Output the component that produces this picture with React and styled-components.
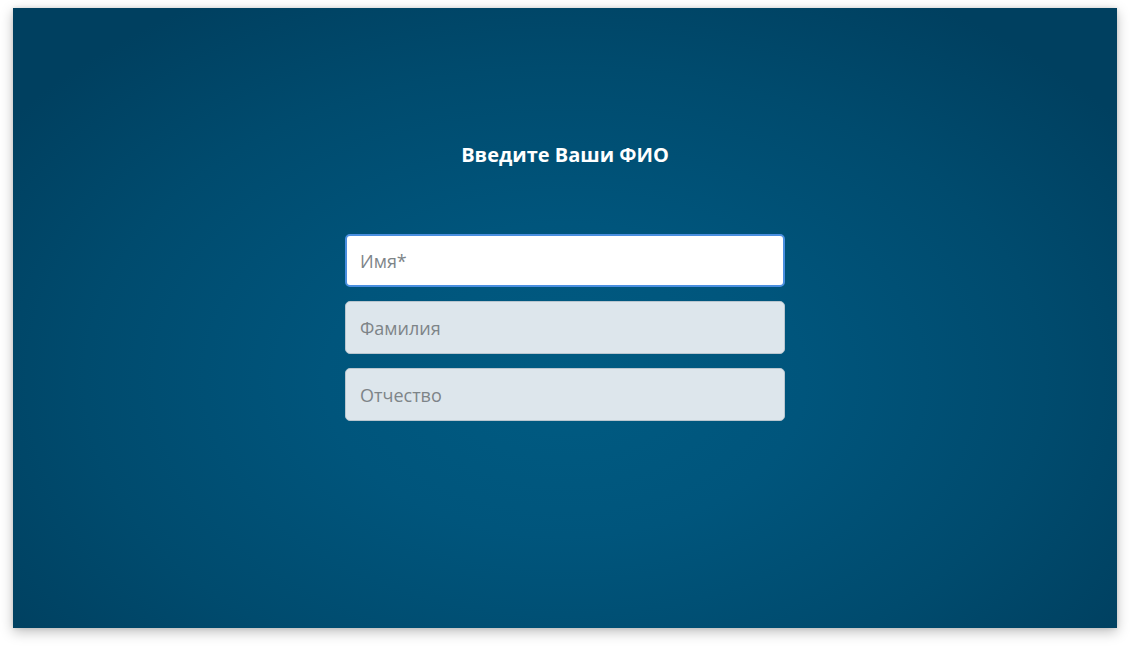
import React, { useState } from 'react'
import styled, { createGlobalStyle } from 'styled-components'

const GlobalStyle = createGlobalStyle`
    html, body {
        margin: 0;
        padding: 0;
        background: #ffffff;
        font-family: "Open Sans", "Liberation Sans", sans-serif;
    }
    #root {
        width: 1130px;
        height: 646px;
    }
`

const Page = styled.div`
    width: 100%;
    height: 100%;
    padding: 8px 13px 18px 13px;
    box-sizing: border-box;
    display: flex;
`

const Panel = styled.div`
    flex: 1;
    background: radial-gradient(ellipse 62% 72% at 50% 60%, #005b82 0%, #00557c 35%, #004b6e 70%, #004060 100%);
    box-shadow: 0 4px 12px rgba(0, 0, 0, 0.25), 0 0 4px rgba(0, 0, 0, 0.12);
    display: flex;
    flex-direction: column;
    align-items: center;
    padding-top: 132px;
    box-sizing: border-box;
`

const Title = styled.h1`
    margin: 0 0 64px 0;
    font-family: "Open Sans", sans-serif;
    font-size: 20px;
    font-weight: 700;
    color: #ffffff;
    line-height: 30px;
`

const Form = styled.form`
    width: 440px;
    display: flex;
    flex-direction: column;
    gap: 14px;
`

const Field = styled.input`
    height: 53px;
    width: 100%;
    box-sizing: border-box;
    border-radius: 5px;
    border: ${p => p.$active ? '2px solid #4a8fe0' : '1px solid #b9c6cf'};
    background: ${p => p.$active ? '#ffffff' : '#dde6ec'};
    padding: 0 ${p => p.$active ? '13px' : '14px'};
    font-family: "Open Sans", sans-serif;
    font-size: 18px;
    color: #333;
    outline: none;
    &::placeholder {
        color: #7d8488;
    }
`

const App = () => {
    const [values, setValues] = useState({ name: '', surname: '', patronymic: '' })
    const handleChange = (event) => {
        setValues({ ...values, [event.target.name]: event.target.value })
    }

    return (
        <>
            <GlobalStyle />
            <Page>
                <Panel>
                    <Title>Введите Ваши ФИО</Title>
                    <Form onSubmit={e => e.preventDefault()}>
                        <Field $active name='name' placeholder='Имя*' value={values.name} onChange={handleChange} autoFocus />
                        <Field name='surname' placeholder='Фамилия' value={values.surname} onChange={handleChange} />
                        <Field name='patronymic' placeholder='Отчество' value={values.patronymic} onChange={handleChange} />
                    </Form>
                </Panel>
            </Page>
        </>
    )
}

export default App
